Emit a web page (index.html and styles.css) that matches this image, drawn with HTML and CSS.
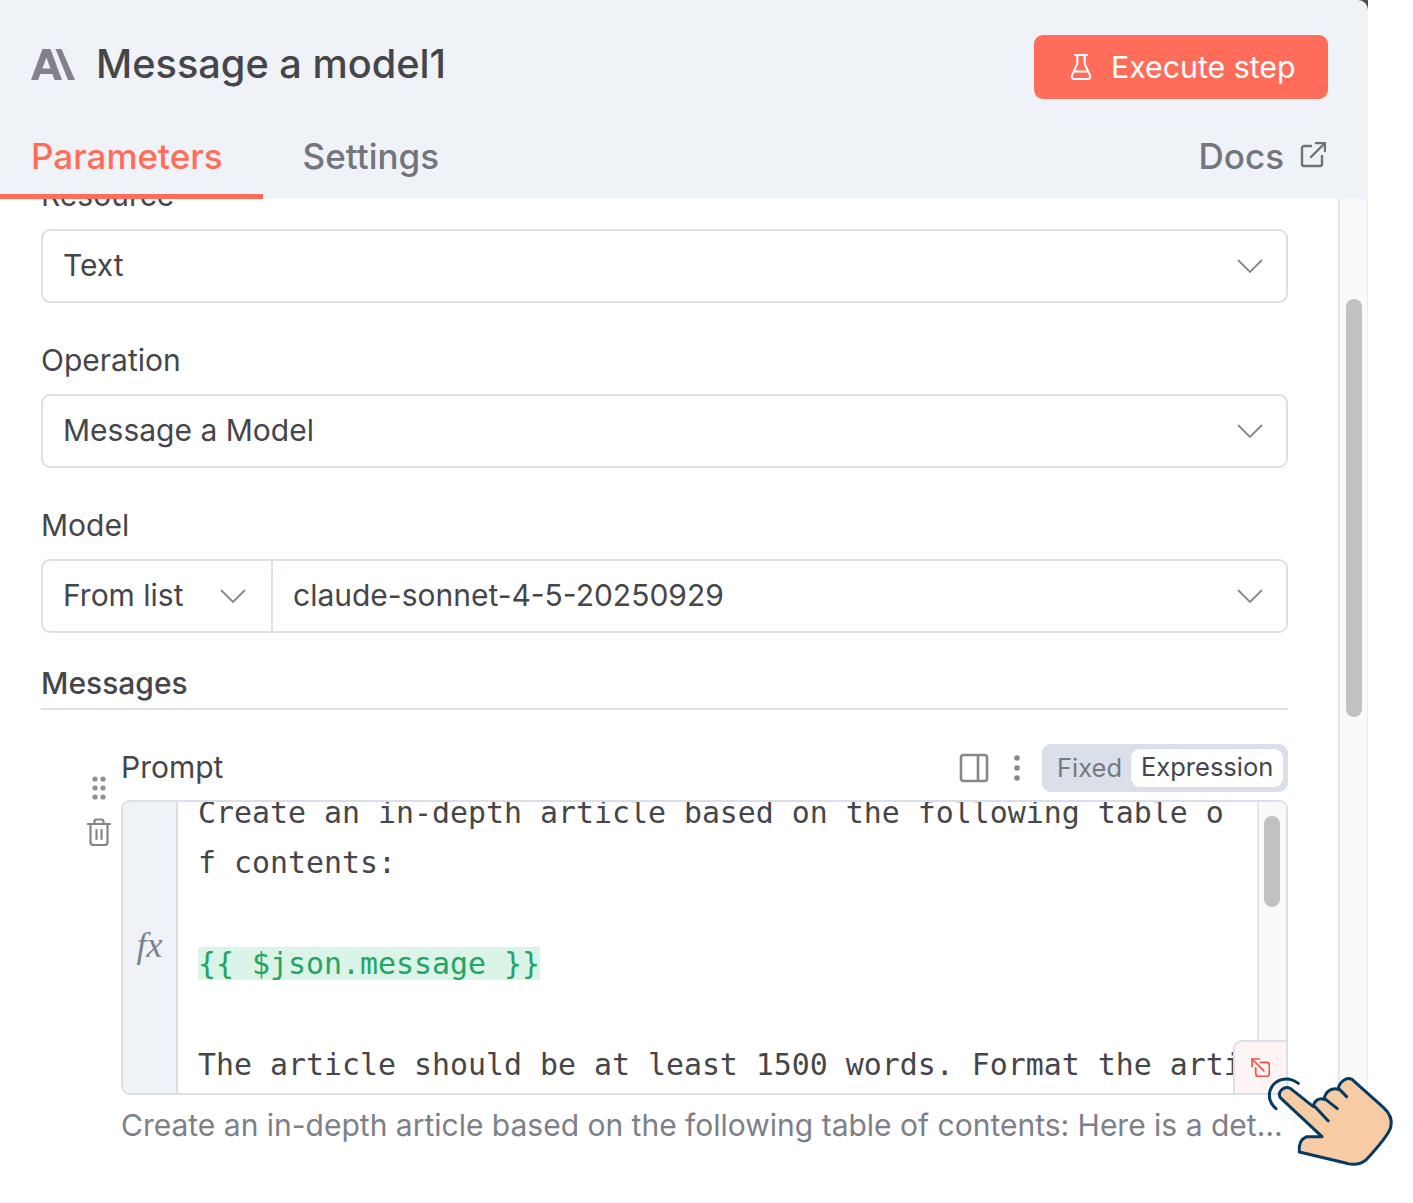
FILE: index.html
```html
<!DOCTYPE html>
<html lang="en">
<head>
  <meta charset="UTF-8">
  <title>Message a model1</title>
  <link rel="stylesheet" href="styles.css">
</head>
<body>
  <div class="panel">
    <div class="header">
      <div class="titleRow">
        <div class="nodeName">
          <svg class="logo" viewBox="0 0 44 31"><path fill="#82828c" fill-rule="evenodd" d="M11.5 0H19.5L31 31H23.6L21.4 25H9.4L7.2 31H0ZM15.4 8.6 11.4 19.5H19.4ZM24.5 0H30.5L44 31H37Z"/></svg>
          <span>Message a model1</span>
        </div>
        <button class="execBtn">
          <svg class="flask" viewBox="0 0 24 30" fill="none" stroke="#fff" stroke-width="2.2" stroke-linecap="round" stroke-linejoin="round"><path d="M8 2v9.5L2 24.5A2.5 2.5 0 0 0 4.3 28h15.4a2.5 2.5 0 0 0 2.3-3.5L16 11.5V2"/><path d="M5.5 2h13"/><path d="M5 20h14"/></svg>
          Execute step
        </button>
      </div>
      <div class="tabs">
        <div class="tab active">Parameters</div>
        <div class="tab">Settings</div>
        <div class="tab docs">Docs
          <svg class="extIcon" viewBox="0 0 26 26" fill="none" stroke="#6f7379" stroke-width="2.4" stroke-linecap="round" stroke-linejoin="round"><path d="M11 4H4a2 2 0 0 0-2 2v16a2 2 0 0 0 2 2h16a2 2 0 0 0 2-2v-8"/><path d="M16 1h9v8"/><path d="M25 1 11 15"/></svg>
        </div>
      </div>
    </div>

    <div class="body">
      <div class="form">
        <div class="field">
          <div class="label">Resource</div>
          <div class="select">Text <svg class="chev" viewBox="0 0 26 14"><path d="M1 1 13 13 25 1"/></svg></div>
        </div>
        <div class="field">
          <div class="label">Operation</div>
          <div class="select">Message a Model <svg class="chev" viewBox="0 0 26 14"><path d="M1 1 13 13 25 1"/></svg></div>
        </div>
        <div class="field">
          <div class="label">Model</div>
          <div class="select split">
            <div class="modeCol">From list <svg class="chev" viewBox="0 0 26 14"><path d="M1 1 13 13 25 1"/></svg></div>
            <div class="valueCol">claude-sonnet-4-5-20250929 <svg class="chev" viewBox="0 0 26 14"><path d="M1 1 13 13 25 1"/></svg></div>
          </div>
        </div>

        <div class="sectionTitle">Messages</div>

        <div class="promptItem">
          <div class="itemTools">
            <svg class="drag" viewBox="0 0 14 24" fill="#8d9097"><circle cx="3" cy="3" r="2.6"/><circle cx="11" cy="3" r="2.6"/><circle cx="3" cy="12" r="2.6"/><circle cx="11" cy="12" r="2.6"/><circle cx="3" cy="21" r="2.6"/><circle cx="11" cy="21" r="2.6"/></svg>
            <svg class="trash" viewBox="0 0 24 28" fill="none" stroke="#82858c" stroke-width="2.2" stroke-linecap="round" stroke-linejoin="round"><path d="M1 6h22"/><path d="M3.5 6v18a3 3 0 0 0 3 3h11a3 3 0 0 0 3-3V6"/><path d="M7.5 6V3.5a2 2 0 0 1 2-2h5a2 2 0 0 1 2 2V6"/><path d="M9.5 12v9"/><path d="M14.5 12v9"/></svg>
          </div>
          <div class="promptMain">
            <div class="promptHead">
              <span class="promptLabel">Prompt</span>
              <div class="promptActions">
                <svg class="sideIcon" viewBox="0 0 30 30" fill="none" stroke="#84878e" stroke-width="2.6" stroke-linejoin="round"><rect x="2" y="2" width="26" height="26" rx="2.5"/><path d="M19 2v26"/></svg>
                <svg class="moreIcon" viewBox="0 0 6 26" fill="#84878e"><circle cx="3" cy="3" r="2.8"/><circle cx="3" cy="13" r="2.8"/><circle cx="3" cy="23" r="2.8"/></svg>
                <div class="toggle">
                  <span class="toggleItem">Fixed</span>
                  <span class="toggleItem on">Expression</span>
                </div>
              </div>
            </div>
            <div class="editor">
              <div class="gutter">fx</div>
              <div class="code">
                <div class="line">Create an in-depth article based on the following table o</div>
                <div class="line">f contents:</div>
                <div class="line">&nbsp;</div>
                <div class="line"><span class="expr">{{ $json.message }}</span></div>
                <div class="line">&nbsp;</div>
                <div class="line">The article should be at least 1500 words. Format the article</div>
              </div>
              <div class="editorBar"><div class="editorThumb"></div></div>
              <div class="expandBtn">
                <svg viewBox="0 0 56 56" fill="none" stroke="#f4533f" stroke-width="5" stroke-linecap="round" stroke-linejoin="round"><path d="M28 13H46a8 8 0 0 1 8 8V46a8 8 0 0 1-8 8H22a8 8 0 0 1-8-8V29"/><path d="M3 25V3H25"/><path d="M3 3 38 38"/></svg>
              </div>
            </div>
            <div class="hint">Create an in-depth article based on the following table of contents: Here is a detailed outline for the article</div>
          </div>
        </div>
      </div>
      <div class="track"><div class="thumb"></div></div>
    </div>

    <div class="tabLine"></div>
  </div>

  <svg class="hand" viewBox="0 0 639 549" fill="none" stroke="#053a63" stroke-width="9" stroke-linecap="round" stroke-linejoin="round">
    <path d="M295 190C262 165 222 178 210 212 205 232 212 252 228 266"/>
    <path fill="#f7cba3" d="M240 232C232 214 254 195 272 206L340 260C342 242 358 232 372 238 376 214 396 202 414 208 418 186 438 170 456 178L550 262C570 280 578 300 572 322 566 345 530 385 500 418 484 432 462 436 440 430L298 396C296 378 300 358 320 350H366Z"/>
    <path d="M345 260 385 303"/>
    <path d="M374 236 412 266"/>
    <path d="M416 206 440 230"/>
  </svg>
</body>
</html>
```
FILE: styles.css
```css
* { box-sizing: border-box; }
body { margin: 0; background: #fff; font-family: Inter, 'Noto Sans', Arial, sans-serif; color: #444; }

.panel { position: relative; width: 1368px; height: 1165px; overflow: hidden; background: #4c4c54; display: flex; flex-direction: column; }
.header { height: 199px; flex: none; background: #eff3f8; border-top-right-radius: 10px; position: relative; z-index: 1; }
.titleRow { display: flex; justify-content: space-between; align-items: flex-start; padding: 35px 40px 0 31px; height: 120px; }
.nodeName { display: flex; align-items: center; gap: 21px; font-size: 39.7px; font-weight: 500; color: #46464a; margin-top: 5px; }
.logo { width: 44px; height: 31px; }
.execBtn { display: flex; align-items: center; gap: 19px; width: 294px; height: 64px; padding: 0 0 0 36px; border: none; border-radius: 9px; background: #ff6d5a; color: #fff; font-family: inherit; font-size: 30.3px; }
.flask { width: 22px; height: 30px; }

.tabs { display: flex; padding: 0 42px 0 31px; gap: 80px; }
.tab { font-size: 35px; font-weight: 500; color: #72767c; line-height: 72px; }
.tab.active { color: #ff6d5a; }
.tab.docs { margin-left: auto; display: flex; align-items: center; gap: 16px; }
.extIcon { width: 26px; height: 26px; margin-top: -2px; }
.tabLine { position: absolute; left: 0; top: 194px; width: 263px; height: 5px; background: #ff6d5a; z-index: 2; }

.body { flex: 1; display: flex; background: #fff; overflow: hidden; min-height: 0; }
.form { width: 1338px; padding: 0 50px 0 41px; margin-top: -24px; }
.field { margin-bottom: 37px; }
.label { height: 40px; line-height: 40px; font-size: 30px; margin-bottom: 14px; color: #46464a; }
.select { height: 74px; display: flex; align-items: center; justify-content: space-between; padding: 0 23px 2px 20px; border: 2px solid #dbdfe9; border-radius: 9px; font-size: 30px; color: #46464a; background: #fff; }
.chev { width: 26px; height: 14px; margin-top: 2px; fill: none; stroke: #85888e; stroke-width: 1.8; flex: none; }
.select.split { padding: 0; }
.modeCol { width: 230px; height: 100%; padding: 0 25px 2px 20px; display: flex; align-items: center; justify-content: space-between; border-right: 2px solid #dbdfe9; }
.valueCol { flex: 1; padding: 0 23px 2px 20px; display: flex; align-items: center; justify-content: space-between; }

.sectionTitle { height: 47px; margin-top: -7px; line-height: 40px; font-size: 30px; font-weight: 500; color: #46464a; border-bottom: 2px solid #dbdfe9; }

.promptItem { display: flex; margin-top: 34px; }
.itemTools { width: 80px; padding: 32px 0 0 36px; display: flex; flex-direction: column; align-items: center; gap: 18px; }
.drag { width: 14px; height: 24px; }
.trash { width: 24px; height: 28px; }
.promptMain { width: 1167px; }
.promptHead { height: 56px; display: flex; justify-content: space-between; align-items: flex-start; }
.promptLabel { font-size: 30px; color: #46464a; line-height: 46px; }
.promptActions { display: flex; align-items: center; }
.sideIcon { width: 30px; height: 30px; }
.moreIcon { width: 6px; height: 26px; margin: 0 22px 0 25px; }
.toggle { display: flex; align-items: center; height: 48px; padding: 0 5px 0 15px; background: #dbdfe9; border-radius: 9px; font-size: 25.5px; width: 246px; }
.toggleItem { color: #757980; width: 74px; margin-top: -2px; }
.toggleItem.on { flex: 1; height: 38px; margin-top: 0; line-height: 36px; background: #fff; border-radius: 9px; color: #46464a; padding: 0 0 0 10px; }

.editor { position: relative; height: 295px; display: flex; border: 2px solid #dbdfe9; border-radius: 9px; overflow: hidden; background: #fff; }
.gutter { width: 55px; flex: none; display: flex; align-items: center; justify-content: center; padding-bottom: 6px; background: #eff3f8; border-right: 2px solid #dbdfe9; font-family: 'Liberation Serif', serif; font-style: italic; font-size: 36px; color: #7d818f; }
.code { flex: 1; min-width: 0; overflow: hidden; padding: 0 0 0 20px; margin-top: -14px; font-family: 'DejaVu Sans Mono', monospace; font-size: 29.9px; color: #46464a; }
.line { height: 50.4px; line-height: 50.4px; white-space: pre; }
.expr { display: inline-block; height: 33px; line-height: 33px; background: #daf4e7; color: #22a565; }
.editorBar { width: 29px; flex: none; padding: 14px 6px 0 5px; background: #fafafa; border-left: 2px solid #e6e6e6; }
.editorThumb { height: 91px; background: #c1c1c1; border-radius: 8px; }
.expandBtn { position: absolute; right: 0; bottom: 0; width: 53px; height: 53px; display: flex; align-items: center; justify-content: center; background: #fdf4f3; border-top: 2px solid #dbdfe9; border-left: 2px solid #dbdfe9; border-top-left-radius: 9px; }
.expandBtn svg { width: 19px; height: 19px; }
.hint { margin-top: 9px; font-size: 30px; line-height: 42px; color: #7d8088; white-space: nowrap; overflow: hidden; text-overflow: ellipsis; width: 1167px; }

.track { width: 30px; flex: none; padding: 100px 5px 0 6px; background: #fafafa; border-left: 2px solid #e6e6e6; border-right: 1px solid #ececec; }
.thumb { height: 418px; background: #c1c1c1; border-radius: 8px; }

.hand { position: absolute; left: 1200px; top: 1020px; width: 213px; height: 183px; }
```
